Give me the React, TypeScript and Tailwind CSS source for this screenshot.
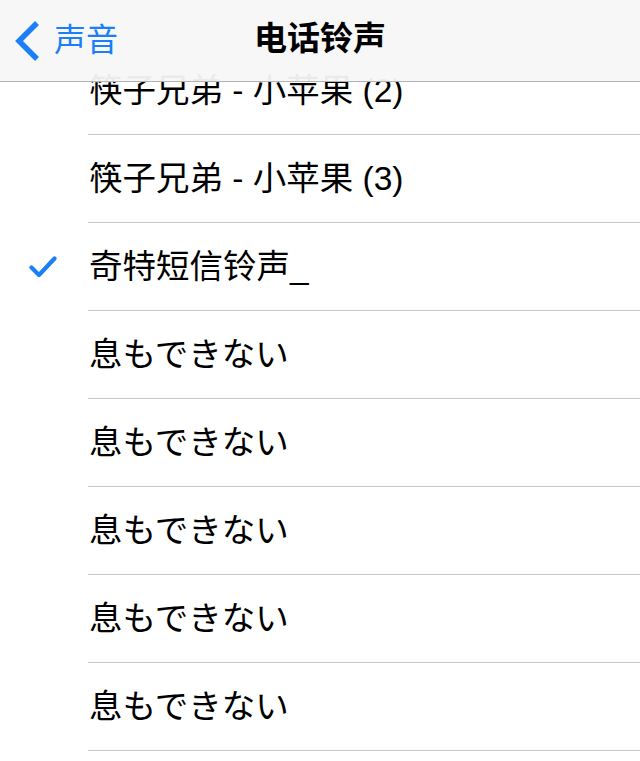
import React from "react";

const font = { fontFamily: '"Liberation Sans", "Noto Sans CJK SC", sans-serif' };

const rows = [
    { title: "筷子兄弟 - 小苹果 (2)" },
    { title: "筷子兄弟 - 小苹果 (3)" },
    { title: "奇特短信铃声_", checked: true },
    { title: "息もできない" },
    { title: "息もできない" },
    { title: "息もできない" },
    { title: "息もできない" },
    { title: "息もできない" },
    { title: "" },
];

function Chevron() {
    return (
        <svg width="26" height="42" viewBox="0 0 26 42" fill="none">
            <path d="M23 3 L5 21 L23 39" stroke="#1a7ff8" strokeWidth="5.5" strokeLinejoin="miter" />
        </svg>
    );
}

function Check() {
    return (
        <svg width="28" height="24" viewBox="0 0 28 24" fill="none">
            <path d="M2.5 12.5 L10 20 L25.5 3.5" stroke="#1a7ff8" strokeWidth="4.2" strokeLinecap="round" strokeLinejoin="round" />
        </svg>
    );
}

export default function App() {
    return (
        <div className="relative w-[640px] h-[761px] overflow-hidden bg-white text-black" style={font}>
            <div className="absolute top-0 left-0 right-0 z-10 h-[82px] bg-[#f7f7f7]/95 border-b border-[#b3b3b3] grid grid-cols-[1fr_auto_1fr] items-center">
                <div className="flex items-center pl-[14px] gap-[14px] text-[#1a7ff8] text-[32px] leading-none">
                    <Chevron />
                    <span className="-mt-[2px]">声音</span>
                </div>
                <h1 className="text-[33px] font-bold leading-none -mt-[4px]">电话铃声</h1>
                <div />
            </div>

            <div className="mt-[47px]">
                {rows.map((row, i) => (
                    <div key={i} className="flex h-[88px]">
                        <div className="w-[88px] flex items-center justify-center pr-[2px]">
                            {row.checked && <Check />}
                        </div>
                        <div className="flex-1 flex items-center border-b border-[#c8c7cc] text-[33.5px] leading-none pl-[1px]">
                            {row.title}
                        </div>
                    </div>
                ))}
            </div>
        </div>
    );
}
